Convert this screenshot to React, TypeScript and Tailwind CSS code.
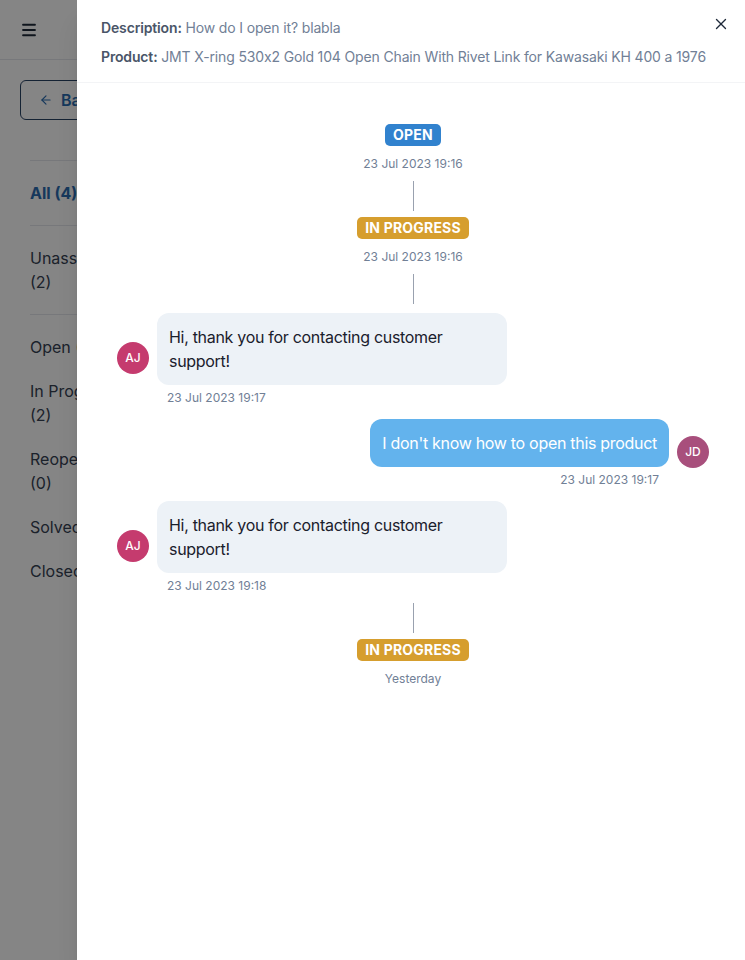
import { ArrowLeft, Menu, X } from "lucide-react"

const font = { fontFamily: "Inter, 'Noto Sans', sans-serif" }

function StatusBadge({ label, color }: { label: string; color: string }) {
  return (
    <span className={`inline-block rounded-[5px] px-2 text-sm font-bold leading-[22px] tracking-[0.2px] text-white uppercase ${color}`}>
      {label}
    </span>
  )
}

function Connector({ top = "mt-[8px]" }: { top?: string }) {
  return <div className={`${top} mb-[6px] h-[30px] w-px bg-gray-400`} />
}

function StatusEvent({ label, color, date }: { label: string; color: string; date: string }) {
  return (
    <div className="flex flex-col items-center">
      <StatusBadge label={label} color={color} />
      <div className="mt-[9px] text-xs leading-[18px] text-[#718096]">{date}</div>
    </div>
  )
}

function Avatar({ initials, color }: { initials: string; color: string }) {
  return (
    <div className={`mb-1 flex h-8 w-8 shrink-0 items-center justify-center rounded-full text-xs font-medium text-white ${color}`}>
      {initials}
    </div>
  )
}

function AgentMessage({ text, date }: { text: string; date: string }) {
  return (
    <div className="flex items-center gap-2 pl-4">
      <Avatar initials="AJ" color="bg-[#c53b6e]" />
      <div className="flex flex-col">
        <div className="max-w-[350px] rounded-xl bg-[#edf2f7] px-3 py-3 text-base leading-6 tracking-[-0.3px] text-[#1a202c]">{text}</div>
        <div className="mt-1 ml-[10px] text-xs leading-[18px] text-[#718096]">{date}</div>
      </div>
    </div>
  )
}

function CustomerMessage({ text, date }: { text: string; date: string }) {
  return (
    <div className="flex items-center justify-end gap-2 pr-3">
      <div className="flex flex-col items-end">
        <div className="max-w-[350px] rounded-xl bg-[#63b3ed] px-3 py-3 text-base leading-6 tracking-[-0.3px] text-white">{text}</div>
        <div className="mt-1 mr-[10px] text-xs leading-[18px] text-[#718096]">{date}</div>
      </div>
      <Avatar initials="JD" color="bg-[#a84f7c]" />
    </div>
  )
}

export default function App() {
  const filters = ["Unassigned (2)", "Open (1)", "In Progress (2)", "Reopened (0)", "Solved (0)", "Closed (0)"]

  return (
    <div className="relative h-[960px] w-[745px] overflow-hidden bg-white" style={font}>
      {/* page behind the drawer */}
      <div className="flex h-[60px] items-center border-b border-gray-200 px-5">
        <Menu size={18} strokeWidth={2.4} className="text-gray-800" />
      </div>
      <div className="px-5 pt-5">
        <button className="flex h-10 items-center gap-2 rounded-md border border-[#2a4365] pr-4 pl-[18px] font-semibold text-[#2b6cb0]">
          <ArrowLeft size={14} />
          Back
        </button>
        <div className="mt-10 ml-[10px] w-[88px]">
          <div className="border-t border-gray-200 py-5 font-bold text-[#2b6cb0]">All (4)</div>
          <div className="border-t border-gray-200 pt-5">
            <div className="pb-5 text-gray-700">{filters[0]}</div>
            <div className="space-y-5 border-t border-gray-200 pt-5 text-gray-700">
              {filters.slice(1).map(f => (
                <div key={f}>{f}</div>
              ))}
            </div>
          </div>
        </div>
      </div>

      {/* overlay */}
      <div className="absolute inset-0 bg-black/[0.48]" />

      {/* drawer */}
      <div className="absolute top-0 right-0 flex h-full w-[668px] flex-col bg-white shadow-xl">
        <button className="absolute top-2 right-2 flex h-8 w-8 items-center justify-center text-gray-800">
          <X size={18} strokeWidth={1.8} />
        </button>
        <div className="border-b border-gray-100 px-6 pt-[17px] pb-[15px] text-sm leading-[21px] tracking-[-0.15px] text-[#718096] [font-feature-settings:'calt'_0]">
          <div>
            <span className="font-semibold text-[#4a5568]">Description:</span> How do I open it? blabla
          </div>
          <div className="mt-2">
            <span className="font-semibold text-[#4a5568]">Product:</span> JMT X-ring 530x2 Gold 104 Open Chain With Rivet Link for Kawasaki KH 400 a 1976
          </div>
        </div>

        <div className="flex flex-col pt-[41px] pr-6 pl-6">
          <div className="flex flex-col items-center pl-1">
            <StatusEvent label="Open" color="bg-[#3182ce]" date="23 Jul 2023 19:16" />
            <Connector />
            <StatusEvent label="In Progress" color="bg-[#d69e2e]" date="23 Jul 2023 19:16" />
            <Connector />
          </div>
          <div className="mt-[3px] flex flex-col gap-3">
            <AgentMessage text="Hi, thank you for contacting customer support!" date="23 Jul 2023 19:17" />
            <CustomerMessage text="I don't know how to open this product" date="23 Jul 2023 19:17" />
            <AgentMessage text="Hi, thank you for contacting customer support!" date="23 Jul 2023 19:18" />
          </div>
          <div className="flex flex-col items-center pl-1">
            <Connector top="mt-[8px]" />
            <StatusEvent label="In Progress" color="bg-[#d69e2e]" date="Yesterday" />
          </div>
        </div>
      </div>
    </div>
  )
}
